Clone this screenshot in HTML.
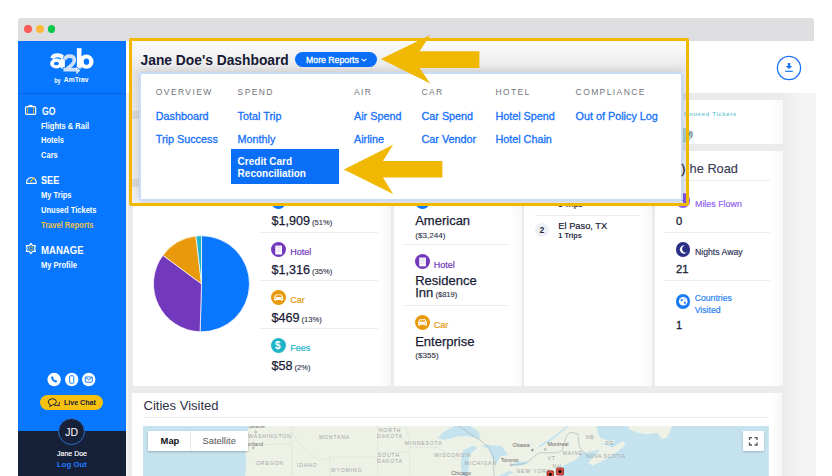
<!DOCTYPE html>
<html><head><meta charset="utf-8">
<style>
*{margin:0;padding:0;box-sizing:border-box}
html,body{width:832px;height:476px;overflow:hidden;background:#fff;font-family:"Liberation Sans",sans-serif}
.a{position:absolute;white-space:nowrap;line-height:1}
.card{position:absolute;background:linear-gradient(90deg,#fff 0,#fff calc(100% - 11px),#f7f7f7 100%)}
.sb{color:#fff;font-weight:700}
</style></head><body>
<div class="a" style="left:17.5px;top:17.5px;width:796.5px;height:23px;background:#dedee0;border-radius:3px 3px 0 0"></div>
<div class="a" style="left:24.20px;top:25.30px;width:7.8px;height:7.8px;border-radius:50%;background:#fd5c57;"></div>
<div class="a" style="left:36.30px;top:25.30px;width:7.8px;height:7.8px;border-radius:50%;background:#feb93a;"></div>
<div class="a" style="left:47.70px;top:25.30px;width:7.8px;height:7.8px;border-radius:50%;background:#0cc84b;"></div>
<div class="a" style="left:18px;top:40.5px;width:108px;height:436px;background:#0677fe;"></div>
<div class="a" style="left:18px;top:431px;width:108px;height:45px;background:#172039;"></div>
<div class="a" style="left:126px;top:40.5px;width:688px;height:53px;background:#fff;"></div>
<div class="a" style="left:126px;top:93px;width:690px;height:383px;background:#ebebeb;"></div>
<div class="a" style="left:126px;top:93px;width:1.6px;height:383px;background:#f5f3f1;"></div>
<div class="a" style="left:782.5px;top:93px;width:33.5px;height:383px;background:linear-gradient(90deg,#ebebeb 0px,#f0f0f0 8px,#f4f4f4 20px);"></div>
<svg class="a" style="left:18px;top:40px" width="108" height="60" viewBox="18 40 108 60">
 <path d="M52.2 58.3 Q53.2 55.2 57.6 55.2 Q62.9 55.2 62.9 59.3 V68.5" fill="none" stroke="#fff" stroke-width="4"/>
 <path fill-rule="evenodd" fill="#fff" d="M50.1 63.5 A6.3 5.1 0 1 0 62.7 63.5 A6.3 5.1 0 1 0 50.1 63.5 Z M53.9 63.5 A2.5 1.85 0 1 0 58.9 63.5 A2.5 1.85 0 1 0 53.9 63.5 Z"/>
 <rect x="76.9" y="48.2" width="4.6" height="20.3" fill="#fff"/>
 <path fill-rule="evenodd" fill="#fff" d="M79.2 61.7 A7.2 7.1 0 1 0 93.6 61.7 A7.2 7.1 0 1 0 79.2 61.7 Z M83.7 61.7 A2.75 3.1 0 1 0 89.2 61.7 A2.75 3.1 0 1 0 83.7 61.7 Z"/>
 <g stroke="#0677fe" stroke-width="1" fill="none">
  <path d="M64.6 59.6 Q65.5 56.1 69.6 56.1 Q74.4 56.1 74.4 60 Q74.4 62.6 71 65.6 L66.2 69.6" stroke-width="4.8"/>
  <rect x="63.4" y="67.6" width="13.6" height="4" />
  <path d="M76.2 66.2 L80.6 70.6 L76.2 75 Z"/>
 </g>
 <g fill="#d0e0f8">
  <path d="M64.6 59.6 Q65.5 56.1 69.6 56.1 Q74.4 56.1 74.4 60 Q74.4 62.6 71 65.6 L66.2 69.6" fill="none" stroke="#d0e0f8" stroke-width="3.6"/>
  <rect x="63.4" y="67.8" width="13.6" height="3.7"/>
  <path d="M76.2 66.6 L80.4 70.6 L76.2 74.6 Z"/>
 </g>
 <text x="54.3" y="82.5" font-family="Liberation Sans" font-weight="700" font-size="6.4" fill="#fff" textLength="6.3" lengthAdjust="spacingAndGlyphs">by</text>
 <text x="63.8" y="82.4" font-family="Liberation Sans" font-weight="700" font-size="6.6" fill="#fff" textLength="24.7" lengthAdjust="spacingAndGlyphs">AmTrav</text>
</svg>
<div class="a" style="left:18px;top:92.8px;width:108px;height:1px;background:#0a63d8;"></div>
<svg class="a" style="left:18px;top:100px" width="30" height="160" viewBox="18 100 30 160">
 <rect x="25.5" y="106.6" width="10.2" height="7.8" rx="1.2" fill="none" stroke="#fff" stroke-width="1.1"/>
 <path d="M29 106.6 V105.4 H32.2 V106.6" fill="none" stroke="#fff" stroke-width="1"/>
 <path d="M27.6 107.2 V113.8 M33.6 107.2 V113.8" stroke="#e2b424" stroke-width="0.9"/>
 <path d="M26.6 183.4 A4.9 4.9 0 1 1 36.2 183.4 Z" fill="none" stroke="#fff" stroke-width="1.1"/>
 <path d="M31 180.8 L34.2 178" stroke="#e2b424" stroke-width="1.2" stroke-linecap="round"/>
 <circle cx="31" cy="180.8" r="0.9" fill="#e2b424"/>
 <path d="M30.85 243.4 L32.6 245.6 L35.4 245.6 L34.6 248.5 L35.4 251.4 L32.6 251.4 L30.85 253.6 L29.1 251.4 L26.3 251.4 L27.1 248.5 L26.3 245.6 L29.1 245.6 Z" fill="none" stroke="#fff" stroke-width="1.1" stroke-linejoin="round"/>
 <circle cx="30.85" cy="248.5" r="1.7" fill="none" stroke="#e2b424" stroke-width="0.9"/>
</svg>
<div class="a" style="left:41.5px;top:106.80px;font-size:10.2px;font-weight:700;color:#fff;transform:scaleX(0.85);transform-origin:0 0;">GO</div>
<div class="a" style="left:41.0px;top:122.80px;font-size:8.2px;font-weight:700;color:#fff;transform:scaleX(0.92);transform-origin:0 0;">Flights &amp; Rail</div>
<div class="a" style="left:41.0px;top:137.30px;font-size:8.2px;font-weight:700;color:#fff;transform:scaleX(0.92);transform-origin:0 0;">Hotels</div>
<div class="a" style="left:41.0px;top:152.00px;font-size:8.2px;font-weight:700;color:#fff;transform:scaleX(0.92);transform-origin:0 0;">Cars</div>
<div class="a" style="left:41.3px;top:175.60px;font-size:10.2px;font-weight:700;color:#fff;transform:scaleX(0.9);transform-origin:0 0;">SEE</div>
<div class="a" style="left:41.0px;top:192.40px;font-size:8.2px;font-weight:700;color:#fff;transform:scaleX(0.92);transform-origin:0 0;">My Trips</div>
<div class="a" style="left:41.0px;top:207.00px;font-size:8.2px;font-weight:700;color:#fff;transform:scaleX(0.92);transform-origin:0 0;">Unused Tickets</div>
<div class="a" style="left:41.0px;top:221.80px;font-size:8.2px;font-weight:700;color:#f2c14a;transform:scaleX(0.92);transform-origin:0 0;">Travel Reports</div>
<div class="a" style="left:41.3px;top:246.00px;font-size:10.2px;font-weight:700;color:#fff;transform:scaleX(0.94);transform-origin:0 0;">MANAGE</div>
<div class="a" style="left:41.0px;top:262.20px;font-size:8.2px;font-weight:700;color:#fff;transform:scaleX(0.92);transform-origin:0 0;">My Profile</div>
<svg class="a" style="left:46px;top:372px" width="52" height="16" viewBox="46 372 52 16">
 <circle cx="54.1" cy="379.5" r="6.7" fill="#fff"/>
 <circle cx="71.7" cy="379.5" r="6.7" fill="#fff"/>
 <circle cx="88.7" cy="379.5" r="6.7" fill="#fff"/>
 <path d="M51.6 376.6 q0.6 -0.8 1.2 0 l0.7 1 q0.3 0.5 -0.2 0.9 q0.6 1.3 1.8 1.9 q0.4 -0.5 0.9 -0.2 l1 0.7 q0.6 0.5 -0.1 1.2 q-1 0.9 -2.3 0.1 q-2.2 -1.3 -3.3 -3.5 q-0.4 -1.2 0.3 -2.1z" fill="#0677fe"/>
 <rect x="69.6" y="375.8" width="4.2" height="7.4" rx="0.8" fill="none" stroke="#0677fe" stroke-width="0.9"/>
 <rect x="85.3" y="377" width="7" height="5.2" rx="0.5" fill="none" stroke="#0677fe" stroke-width="0.9"/>
 <path d="M85.5 377.3 L88.8 379.9 L92.1 377.3" fill="none" stroke="#0677fe" stroke-width="0.9"/>
</svg>
<div class="a" style="left:40.4px;top:394.6px;width:62.5px;height:15.4px;background:#f5c10e;border-radius:8px"></div>
<svg class="a" style="left:47px;top:397px" width="13" height="11" viewBox="0 0 13 11">
 <path d="M1.2 5 q0 -3 4 -3.3 q4 0 4.2 3 q0 3 -4 3.2 l-2.6 1.8 l0.4 -2.2 q-2 -0.8 -2 -2.5z" fill="none" stroke="#172039" stroke-width="1"/>
 <path d="M7.5 8.5 q2.5 0.5 3.5 -0.5 l1.2 1 l-0.3 -1.6 q1 -1 0.5 -2.5" fill="none" stroke="#172039" stroke-width="1"/>
</svg>
<div class="a" style="left:63.6px;top:399.40px;font-size:7.6px;font-weight:700;color:#172039;transform:scaleX(0.93);transform-origin:0 0;">Live Chat</div>
<div class="a" style="left:58.20px;top:418.00px;width:27px;height:27px;border-radius:50%;background:#172039;border:1.2px solid #2a6fd0"></div>
<div class="a" style="left:58.2px;top:427.80px;width:27px;text-align:center;font-size:10.4px;color:#fff">JD</div>
<div class="a" style="left:18px;top:449.91px;width:108px;text-align:center;font-size:7px;color:#fff;-webkit-text-stroke:0.15px #fff">Jane Doe</div>
<div class="a" style="left:18px;top:460.70px;width:108px;text-align:center;font-size:7.8px;font-weight:700;color:#1f7bff">Log Out</div>
<div class="a" style="left:132px;top:41px;width:554px;height:31px;background:linear-gradient(180deg,#fbfbfb 0%,#f3f3f3 45%,#e6e6e6 100%);"></div>
<div class="a" style="left:140.6px;top:54.20px;font-size:13.8px;font-weight:700;color:#161a35;">Jane Doe's Dashboard</div>
<div class="a" style="left:295.3px;top:51.6px;width:81.6px;height:15.3px;background:#0a6ff6;border-radius:8px"></div>
<div class="a" style="left:306px;top:55.60px;font-size:9px;font-weight:400;color:#fff;transform:scaleX(0.97);transform-origin:0 0;-webkit-text-stroke:0.3px #fff">More Reports</div>
<svg class="a" style="left:359.5px;top:57.3px" width="8" height="6" viewBox="0 0 8 6"><path d="M1.6 1.8 L4 4.1 L6.4 1.8" fill="none" stroke="#fff" stroke-width="1.1"/></svg>
<svg class="a" style="left:776px;top:55px" width="26" height="26" viewBox="776 55 26 26">
 <circle cx="789" cy="68" r="11.6" fill="none" stroke="#1a73f5" stroke-width="1.3"/>
 <path d="M787.8 63 H790.2 V65.9 H792.3 L789 69 L785.7 65.9 H787.8 Z" fill="#1a73f5"/>
 <rect x="785.2" y="70.7" width="7.6" height="1.2" fill="#1a73f5"/>
</svg>
<div class="card" style="left:132px;top:100px;width:650.5px;height:44.4px"></div>
<div class="card" style="left:132.5px;top:150.6px;width:258.5px;height:235.3px"></div>
<div class="card" style="left:394px;top:150.6px;width:127.5px;height:235.3px"></div>
<div class="card" style="left:524.2px;top:150.6px;width:128.2px;height:235.3px"></div>
<div class="card" style="left:655px;top:150.6px;width:127.5px;height:235.3px"></div>
<div class="card" style="left:132.3px;top:392.8px;width:650.2px;height:83.2px"></div>
<svg class="a" style="left:150px;top:232px" width="104" height="104" viewBox="150 232 104 104">
 <path d="M201.5 283.8 L201.5 235.8 A48 48 0 1 1 200.08 331.78 Z" fill="#0a77ff" stroke="#fff" stroke-width="0.7"/>
 <path d="M201.5 283.8 L200.08 331.78 A48 48 0 0 1 162.86 255.32 Z" fill="#7239bd" stroke="#fff" stroke-width="0.7"/>
 <path d="M201.5 283.8 L162.86 255.32 A48 48 0 0 1 195.98 236.12 Z" fill="#e8990c" stroke="#fff" stroke-width="0.7"/>
 <path d="M201.5 283.8 L195.98 236.12 A48 48 0 0 1 201.5 235.8 Z" fill="#20b4c8" stroke="#fff" stroke-width="0.7"/>
</svg>
<div class="a" style="left:270.50px;top:193.90px;width:15.2px;height:15.2px;border-radius:50%;background:#0a77ff;"></div>
<div class="a" style="left:290.2px;top:198.00px;font-size:9px;font-weight:400;color:#0a77ff;-webkit-text-stroke:0.2px #0a77ff">Air</div>
<div class="a" style="left:271.4px;top:215.20px;font-size:12.6px;font-weight:400;color:#1a1c35;-webkit-text-stroke:0.25px #1a1c35">$1,909<span style="font-size:7.6px;color:#2e3048;-webkit-text-stroke:0.1px #2e3048"> (51%)</span></div>
<div class="a" style="left:260.3px;top:232.10px;width:117.70px;height:1px;background:#ececec"></div>
<div class="a" style="left:270.50px;top:241.80px;width:15.2px;height:15.2px;border-radius:50%;background:#7239bd;"></div>
<svg class="a" style="left:270.50px;top:241.80px" width="15.20" height="15.20" viewBox="0 0 15.2 15.2"><rect x="4.3" y="3.6" width="6.7" height="8.9" fill="#fff"/><path d="M5.6 5.3 H9.6 M5.6 7.3 H9.6 M5.6 9.3 H9.6" stroke="#7239bd" stroke-width="0.45" opacity="0.5"/></svg>
<div class="a" style="left:290.2px;top:247.80px;font-size:9px;font-weight:400;color:#7239bd;-webkit-text-stroke:0.2px #7239bd">Hotel</div>
<div class="a" style="left:271.4px;top:263.60px;font-size:12.6px;font-weight:400;color:#1a1c35;-webkit-text-stroke:0.25px #1a1c35">$1,316<span style="font-size:7.6px;color:#2e3048;-webkit-text-stroke:0.1px #2e3048"> (35%)</span></div>
<div class="a" style="left:260.3px;top:280.00px;width:117.70px;height:1px;background:#ececec"></div>
<div class="a" style="left:270.50px;top:289.90px;width:15.2px;height:15.2px;border-radius:50%;background:#e8990c;"></div>
<svg class="a" style="left:270.50px;top:289.90px" width="15.20" height="15.20" viewBox="0 0 15.2 15.2"><path d="M3.1 7.4 L4.2 5.1 Q4.5 4.4 5.3 4.4 H9.9 Q10.7 4.4 11 5.1 L12.1 7.4 V9.9 H3.1 Z M3.5 9.8 H5.1 V10.8 H3.5 Z M10.1 9.8 H11.7 V10.8 H10.1 Z" fill="#fff"/><path d="M5.1 5.3 H10.1 L10.7 6.9 H4.5 Z" fill="#e8990c"/><circle cx="4.6" cy="8.4" r="0.6" fill="#e8990c"/><circle cx="10.6" cy="8.4" r="0.6" fill="#e8990c"/></svg>
<div class="a" style="left:290.2px;top:295.70px;font-size:9px;font-weight:400;color:#e8990c;-webkit-text-stroke:0.2px #e8990c">Car</div>
<div class="a" style="left:271.4px;top:312.30px;font-size:12.6px;font-weight:400;color:#1a1c35;-webkit-text-stroke:0.25px #1a1c35">$469<span style="font-size:7.6px;color:#2e3048;-webkit-text-stroke:0.1px #2e3048"> (13%)</span></div>
<div class="a" style="left:260.3px;top:328.30px;width:117.70px;height:1px;background:#ececec"></div>
<div class="a" style="left:270.50px;top:338.10px;width:15.2px;height:15.2px;border-radius:50%;background:#20b4c8;"></div>
<div class="a" style="left:274.90px;top:340.50px;font-size:10px;font-weight:700;color:#fff">$</div>
<div class="a" style="left:290.2px;top:344.10px;font-size:9px;font-weight:400;color:#20b4c8;-webkit-text-stroke:0.2px #20b4c8">Fees</div>
<div class="a" style="left:271.4px;top:360.20px;font-size:12.6px;font-weight:400;color:#1a1c35;-webkit-text-stroke:0.25px #1a1c35">$58<span style="font-size:7.6px;color:#2e3048;-webkit-text-stroke:0.1px #2e3048"> (2%)</span></div>
<div class="a" style="left:414.50px;top:194.00px;width:15px;height:15px;border-radius:50%;background:#0a77ff;"></div>
<div class="a" style="left:433.7px;top:198.00px;font-size:9px;font-weight:400;color:#0a77ff;-webkit-text-stroke:0.2px #0a77ff">Air</div>
<div class="a" style="left:415.2px;top:214.20px;font-size:13px;font-weight:400;color:#1a1c35;-webkit-text-stroke:0.25px #1a1c35">American</div>
<div class="a" style="left:415.2px;top:231.60px;font-size:8.1px;font-weight:400;color:#2e3048;-webkit-text-stroke:0.1px #2e3048">($3,244)</div>
<div class="a" style="left:404.3px;top:244.10px;width:104.10px;height:1px;background:#ececec"></div>
<div class="a" style="left:414.50px;top:254.30px;width:15px;height:15px;border-radius:50%;background:#7239bd;"></div>
<svg class="a" style="left:414.50px;top:254.30px" width="15.00" height="15.00" viewBox="0 0 15.2 15.2"><rect x="4.3" y="3.6" width="6.7" height="8.9" fill="#fff"/><path d="M5.6 5.3 H9.6 M5.6 7.3 H9.6 M5.6 9.3 H9.6" stroke="#7239bd" stroke-width="0.45" opacity="0.5"/></svg>
<div class="a" style="left:433.7px;top:260.50px;font-size:9px;font-weight:400;color:#7239bd;-webkit-text-stroke:0.2px #7239bd">Hotel</div>
<div class="a" style="left:415.2px;top:274.10px;font-size:13px;font-weight:400;color:#1a1c35;-webkit-text-stroke:0.25px #1a1c35">Residence</div>
<div class="a" style="left:415.2px;top:286.10px;font-size:13px;font-weight:400;color:#1a1c35;-webkit-text-stroke:0.25px #1a1c35">Inn<span style="font-size:7.6px;color:#2e3048;-webkit-text-stroke:0.1px #2e3048"> ($819)</span></div>
<div class="a" style="left:404.3px;top:304.90px;width:104.10px;height:1px;background:#ececec"></div>
<div class="a" style="left:414.50px;top:314.50px;width:15px;height:15px;border-radius:50%;background:#e8990c;"></div>
<svg class="a" style="left:414.50px;top:314.50px" width="15.00" height="15.00" viewBox="0 0 15.2 15.2"><path d="M3.1 7.4 L4.2 5.1 Q4.5 4.4 5.3 4.4 H9.9 Q10.7 4.4 11 5.1 L12.1 7.4 V9.9 H3.1 Z M3.5 9.8 H5.1 V10.8 H3.5 Z M10.1 9.8 H11.7 V10.8 H10.1 Z" fill="#fff"/><path d="M5.1 5.3 H10.1 L10.7 6.9 H4.5 Z" fill="#e8990c"/><circle cx="4.6" cy="8.4" r="0.6" fill="#e8990c"/><circle cx="10.6" cy="8.4" r="0.6" fill="#e8990c"/></svg>
<div class="a" style="left:433.7px;top:320.90px;font-size:9px;font-weight:400;color:#e8990c;-webkit-text-stroke:0.2px #e8990c">Car</div>
<div class="a" style="left:415.2px;top:335.20px;font-size:13px;font-weight:400;color:#1a1c35;-webkit-text-stroke:0.25px #1a1c35">Enterprise</div>
<div class="a" style="left:415.2px;top:352.40px;font-size:8.1px;font-weight:400;color:#2e3048;-webkit-text-stroke:0.1px #2e3048">($355)</div>
<div class="a" style="left:558.3px;top:201.00px;font-size:7.5px;font-weight:700;color:#2b2d45;">1 Trips</div>
<div class="a" style="left:534.8px;top:215.20px;width:104.20px;height:1px;background:#ececec"></div>
<div class="a" style="left:534.90px;top:222.90px;width:14.6px;height:14.6px;border-radius:50%;background:#edf0f5;"></div>
<div class="a" style="left:539.6px;top:226.40px;font-size:8.6px;font-weight:700;color:#2b2d45;">2</div>
<div class="a" style="left:558.3px;top:222.30px;font-size:9.3px;font-weight:400;color:#1a1c35;-webkit-text-stroke:0.2px #1a1c35">El Paso, TX</div>
<div class="a" style="left:558.3px;top:232.30px;font-size:7.3px;font-weight:700;color:#2b2d45;">1 Trips</div>
<div class="a" style="left:689.6px;top:162.60px;font-size:12.8px;font-weight:400;color:#3a3c55;-webkit-text-stroke:0.15px #3a3c55">he Road</div>
<div class="a" style="left:665px;top:179.70px;width:104.50px;height:1px;background:#ececec"></div>
<div class="a" style="left:675.75px;top:193.25px;width:14.5px;height:14.5px;border-radius:50%;background:#8b5cf6;"></div>
<div class="a" style="left:695px;top:200.20px;font-size:8.9px;font-weight:400;color:#8b5cf6;-webkit-text-stroke:0.15px #8b5cf6">Miles Flown</div>
<div class="a" style="left:676px;top:216.00px;font-size:11.2px;font-weight:400;color:#1a1c35;-webkit-text-stroke:0.3px #1a1c35">0</div>
<div class="a" style="left:665px;top:231.90px;width:104.50px;height:1px;background:#ececec"></div>
<div class="a" style="left:675.75px;top:242.35px;width:14.5px;height:14.5px;border-radius:50%;background:#2b2f85;"></div>
<svg class="a" style="left:675.75px;top:242.35px" width="14.5" height="14.5" viewBox="0 0 14.5 14.5"><path d="M8.6 3.4 A4.2 4.2 0 1 0 11.2 10.3 A3.6 3.6 0 1 1 8.6 3.4 Z" fill="#fff"/></svg>
<div class="a" style="left:695px;top:248.00px;font-size:8.7px;font-weight:400;color:#2b2f55;-webkit-text-stroke:0.15px #2b2f55">Nights Away</div>
<div class="a" style="left:676px;top:264.20px;font-size:11.2px;font-weight:400;color:#1a1c35;-webkit-text-stroke:0.3px #1a1c35">21</div>
<div class="a" style="left:665px;top:280.40px;width:104.50px;height:1px;background:#ececec"></div>
<div class="a" style="left:675.75px;top:294.25px;width:14.5px;height:14.5px;border-radius:50%;background:#1a7cf5;"></div>
<svg class="a" style="left:675.75px;top:294.25px" width="14.5" height="14.5" viewBox="0 0 14.5 14.5"><circle cx="7.25" cy="7.25" r="4.3" fill="#fff"/><path d="M5 5 Q6.5 4.6 7 6 Q6 7.5 4.6 7.2 Z M8.2 7.8 Q9.8 7.4 10 9 Q9 10.4 8 9.6 Z M8.6 4 Q9.6 4.6 9.4 5.6 L8.4 5.2 Z" fill="#1a7cf5"/></svg>
<div class="a" style="left:694.7px;top:293.60px;font-size:8.7px;font-weight:400;color:#1a7cf5;-webkit-text-stroke:0.15px #1a7cf5">Countries</div>
<div class="a" style="left:694.7px;top:305.70px;font-size:8.7px;font-weight:400;color:#1a7cf5;-webkit-text-stroke:0.15px #1a7cf5">Visited</div>
<div class="a" style="left:676px;top:320.40px;font-size:11.2px;font-weight:400;color:#1a1c35;-webkit-text-stroke:0.3px #1a1c35">1</div>
<div class="a" style="left:676.50px;top:128.00px;width:15px;height:15px;border-radius:50%;background:#b7ddd6;"></div>
<div class="a" style="left:684.0px;top:110.60px;font-size:6.2px;font-weight:400;color:#3bb7c8;letter-spacing:0.75px">Unused Tickets</div>
<div class="a" style="left:687px;top:131.00px;font-size:6.8px;font-weight:400;color:#1a1c35;">v)</div>
<div class="a" style="left:143.6px;top:399.40px;font-size:13px;font-weight:400;color:#2d2f45;">Cities Visited</div>
<div class="a" style="left:143.6px;top:417.00px;width:625.40px;height:1px;background:#ececec"></div>
<svg class="a" style="left:143.2px;top:425.7px" width="625.8" height="50.3" viewBox="143.2 425.7 625.8 50.3" font-family="Liberation Sans">
 <rect x="143.2" y="425.7" width="625.8" height="50.3" fill="#eef2e6"/>
 <path d="M143.2 425.7 H250 L247 432 L246 440 L245.5 450 L246.5 462 L245.5 476 H143.2 Z" fill="#c5e3ef"/>
 <path d="M596.8 425.7 L769 425.7 L769 476 L558.8 476 L563.7 465.3 L576.6 458.8 L581 453 L590 451.5 L600.5 449.2 L597 453.5 L588.2 462.4 L592.5 465.3 L605.5 459.5 L618.5 450.8 L625.7 444.4 L622.8 440.8 L612.7 447.2 L602.6 443.6 L600 437 L598.3 433.5 Z" fill="#c5e3ef"/>
 <path d="M599.7 437.1 L609.8 440.8 L615.6 440 L611 444 L603 443 Z" fill="#eef2e6"/>
 <path d="M628 425.7 L672 425.7 L670 432 L666.5 437.9 L661.5 438.4 L657.5 432.5 L648 434 L638 432.4 L630 429.5 Z" fill="#eef2e6"/>
 <path d="M567.4 425.7 L569.5 425.7 L552 440 L540 447 L538.5 446 L551 438 Z" fill="#c5e3ef"/>
 <path d="M437.3 438 L444.5 431.5 L454.6 425.7 L470.5 425.7 L479.1 431.5 L480.6 438.75 L467.6 435.9 L459 435.9 L448.8 438.75 L444.5 439.5 Z" fill="#c5e3ef"/>
 <path d="M463.3 450.3 L473.4 445.2 L477.7 447.4 L469 454.6 L469 469 L466.2 476 L461.8 476 L461.1 463.3 Z" fill="#c5e3ef"/>
 <path d="M480.6 445.2 L487.8 444.5 L502.2 446 L508 454.6 L500.8 456 L496.4 463.3 L492.1 457.5 L489.2 448.8 Z" fill="#c5e3ef"/>
 <path d="M509.4 464.7 L518 461.8 L529.6 460.4 L523.8 464.7 L513.8 466.2 Z M497.9 476 L509.4 470.5 L513.8 472 L506.5 476 Z" fill="#c5e3ef"/>
 <path d="M459 425.7 L480.6 440.2 L487.8 446 L493.6 456 L494.3 476" fill="none" stroke="#9a9fa3" stroke-width="0.5"/>
 <path d="M511.6 464.7 L526 463.3 L539 452.5 L557.8 452.5 L562.1 450.3 L566.5 436 L569.4 432.8 L572.3 432.1 L578.1 433.5 L579.5 446.5 L585.3 453.7" fill="none" stroke="#9a9fa3" stroke-width="0.5"/>
 <g fill="none" stroke="#c4c7c0" stroke-width="0.5" stroke-dasharray="1 1">
  <path d="M246 445 L292 443.5 M292 425.7 V476 M292 432 L305 450 L320 460 L330 457 V476 M330 457 H378 M378 425.7 V476 M378 452 H410 M406 425.7 L410 445 V476 M410 447 L437 447 L450 455 L461 460 M330 476 H378"/>
 </g>
 <g font-weight="400">
 <text x="249" y="427.5" font-size="5.2" fill="#777" letter-spacing="0">Seattle</text>
 <text x="248.4" y="438" font-size="5.2" fill="#9ea3a8" letter-spacing="0.8">WASHINGTON</text>
 <text x="244" y="446" font-size="5.2" fill="#777" letter-spacing="0">Portland</text>
 <text x="256.2" y="465" font-size="5.2" fill="#9ea3a8" letter-spacing="0.8">OREGON</text>
 <text x="319.1" y="438.6" font-size="5.2" fill="#9ea3a8" letter-spacing="0.8">MONTANA</text>
 <text x="297.2" y="467.2" font-size="5.2" fill="#9ea3a8" letter-spacing="0.8">IDAHO</text>
 <text x="330.9" y="471.3" font-size="5.2" fill="#9ea3a8" letter-spacing="0.8">WYOMING</text>
 <text x="379" y="431.4" font-size="5.2" fill="#9ea3a8" letter-spacing="0.8">NORTH</text>
 <text x="377.3" y="437.3" font-size="5.2" fill="#9ea3a8" letter-spacing="0.8">DAKOTA</text>
 <text x="405" y="444.7" font-size="5.2" fill="#9ea3a8" letter-spacing="0.8">MINNESOTA</text>
 <text x="378" y="456.8" font-size="5.2" fill="#9ea3a8" letter-spacing="0.8">SOUTH</text>
 <text x="377.3" y="462.4" font-size="5.2" fill="#9ea3a8" letter-spacing="0.8">DAKOTA</text>
 <text x="434.5" y="457.1" font-size="5.2" fill="#9ea3a8" letter-spacing="0.8">WISCONSIN</text>
 <text x="464.8" y="464.9" font-size="5.2" fill="#9ea3a8" letter-spacing="0.8">MICHIGAN</text>
 <text x="451.4" y="475" font-size="5.4" fill="#666" letter-spacing="0">Chicago</text>
 <text x="500.9" y="461.5" font-size="5.4" fill="#666" letter-spacing="0">Toronto</text>
 <text x="512.8" y="446.6" font-size="5.4" fill="#666" letter-spacing="0">Ottawa</text>
 <text x="547.7" y="445.6" font-size="5.4" fill="#666" letter-spacing="0">Montreal</text>
 <text x="516.7" y="472.3" font-size="5.2" fill="#9ea3a8" letter-spacing="0.8">NEW YORK</text>
 <text x="547.7" y="460" font-size="5.2" fill="#9ea3a8" letter-spacing="0.8">VT</text>
 <text x="552.8" y="468" font-size="5.2" fill="#9ea3a8" letter-spacing="0.8">NH</text>
 <text x="562.9" y="455" font-size="5.2" fill="#9ea3a8" letter-spacing="0.8">MAINE</text>
 <text x="586" y="457.7" font-size="5.2" fill="#9ea3a8" letter-spacing="0.45">NOVA SCOTIA</text>
 <text x="585.9" y="439.1" font-size="5.2" fill="#9ea3a8" letter-spacing="0.8">NB</text>
 <text x="605.7" y="444.6" font-size="5.2" fill="#9ea3a8" letter-spacing="0.8">PE</text>
 </g>
 <circle cx="511.4" cy="464.7" r="1" fill="#fff" stroke="#777" stroke-width="0.5"/>
 <circle cx="545.4" cy="449.2" r="1" fill="#fff" stroke="#777" stroke-width="0.5"/>
 <circle cx="532.6" cy="449.8" r="1.3" fill="#999"/>
 <circle cx="255.8" cy="431.8" r="0.9" fill="#fff" stroke="#777" stroke-width="0.5"/>
 <circle cx="253.5" cy="447.5" r="0.9" fill="#fff" stroke="#777" stroke-width="0.5"/>
 <rect x="556.6" y="467.6" width="7.2" height="7.2" rx="1.2" fill="#e8493b" stroke="#5a1a14" stroke-width="0.6"/>
 <circle cx="560.2" cy="471.2" r="1.7" fill="#111"/>
 <rect x="547.2" y="470.5" width="6.6" height="7" rx="1.2" fill="#e8493b" stroke="#5a1a14" stroke-width="0.6"/>
 <circle cx="550.5" cy="474" r="1.6" fill="#111"/>
</svg>
<div class="a" style="left:148px;top:431px;width:100px;height:20.2px;background:#fff;box-shadow:0 1px 2px rgba(0,0,0,0.25)"></div>
<div class="a" style="left:190px;top:431px;width:1px;height:20.2px;background:#e6e6e6;"></div>
<div class="a" style="left:160.6px;top:435.80px;font-size:9.4px;font-weight:700;color:#111;">Map</div>
<div class="a" style="left:202.5px;top:435.80px;font-size:9.4px;font-weight:400;color:#555;">Satellite</div>
<div class="a" style="left:743.3px;top:430.7px;width:20.5px;height:20.6px;background:#fff;box-shadow:0 1px 2px rgba(0,0,0,0.2)"></div>
<svg class="a" style="left:743.3px;top:430.7px" width="20.5" height="20.6" viewBox="0 0 20.5 20.6"><path d="M6.5 9 V6.6 H9 M11.5 6.6 H14 V9 M14 11.6 V14 H11.5 M9 14 H6.5 V11.6" fill="none" stroke="#555" stroke-width="1.3"/></svg>
<div class="a" style="left:132px;top:72px;width:6.75px;height:131px;background:linear-gradient(180deg,#e6e6e6 0px,#e9e9e9 38.6px,#d9d9d9 38.6px,#d9d9d9 47.4px,#eaeaea 47.4px,#ececec 107px,#dadada 107px,#dadada 115px,#eeeeee 115px,#f1f1f1 131px);"></div>
<div class="a" style="left:682.7px;top:72px;width:3.3px;height:131px;background:rgba(0,0,0,0.07);"></div>
<div class="a" style="left:138.75px;top:201.3px;width:544px;height:1.7px;background:#e9ecf2;"></div>
<div class="a" style="left:138.75px;top:72px;width:543.95px;height:129.3px;background:#fff;border:2.3px solid #c8dcf6;border-radius:2px;box-shadow:0 0 10px rgba(0,0,0,0.14)"></div>
<div class="a" style="left:155.8px;top:88.00px;font-size:8.5px;font-weight:400;color:#717479;letter-spacing:1.4px">OVERVIEW</div>
<div class="a" style="left:237.6px;top:88.00px;font-size:8.5px;font-weight:400;color:#717479;letter-spacing:1.4px">SPEND</div>
<div class="a" style="left:354px;top:88.00px;font-size:8.5px;font-weight:400;color:#717479;letter-spacing:1.4px">AIR</div>
<div class="a" style="left:421.5px;top:88.00px;font-size:8.5px;font-weight:400;color:#717479;letter-spacing:1.4px">CAR</div>
<div class="a" style="left:495.4px;top:88.00px;font-size:8.5px;font-weight:400;color:#717479;letter-spacing:1.4px">HOTEL</div>
<div class="a" style="left:575.6px;top:88.00px;font-size:8.5px;font-weight:400;color:#717479;letter-spacing:1.4px">COMPLIANCE</div>
<div class="a" style="left:155.8px;top:111.40px;font-size:10.8px;font-weight:400;color:#1570fb;-webkit-text-stroke:0.3px #1570fb">Dashboard</div>
<div class="a" style="left:237.6px;top:111.40px;font-size:10.8px;font-weight:400;color:#1570fb;-webkit-text-stroke:0.3px #1570fb">Total Trip</div>
<div class="a" style="left:354px;top:111.40px;font-size:10.8px;font-weight:400;color:#1570fb;-webkit-text-stroke:0.3px #1570fb">Air Spend</div>
<div class="a" style="left:421.5px;top:111.40px;font-size:10.8px;font-weight:400;color:#1570fb;-webkit-text-stroke:0.3px #1570fb">Car Spend</div>
<div class="a" style="left:495.4px;top:111.40px;font-size:10.8px;font-weight:400;color:#1570fb;-webkit-text-stroke:0.3px #1570fb">Hotel Spend</div>
<div class="a" style="left:575.6px;top:111.40px;font-size:10.8px;font-weight:400;color:#1570fb;-webkit-text-stroke:0.3px #1570fb">Out of Policy Log</div>
<div class="a" style="left:155.8px;top:134.30px;font-size:10.8px;font-weight:400;color:#1570fb;-webkit-text-stroke:0.3px #1570fb">Trip Success</div>
<div class="a" style="left:237.6px;top:134.30px;font-size:10.8px;font-weight:400;color:#1570fb;-webkit-text-stroke:0.3px #1570fb">Monthly</div>
<div class="a" style="left:354px;top:134.30px;font-size:10.8px;font-weight:400;color:#1570fb;-webkit-text-stroke:0.3px #1570fb">Airline</div>
<div class="a" style="left:421.5px;top:134.30px;font-size:10.8px;font-weight:400;color:#1570fb;-webkit-text-stroke:0.3px #1570fb">Car Vendor</div>
<div class="a" style="left:495.4px;top:134.30px;font-size:10.8px;font-weight:400;color:#1570fb;-webkit-text-stroke:0.3px #1570fb">Hotel Chain</div>
<div class="a" style="left:230.9px;top:149.3px;width:108.1px;height:34.7px;background:#0a6ff6;"></div>
<div class="a" style="left:237.6px;top:157.00px;font-size:10px;font-weight:700;color:#fff;">Credit Card</div>
<div class="a" style="left:237.6px;top:169.20px;font-size:10px;font-weight:700;color:#fff;">Reconciliation</div>
<div class="a" style="left:129px;top:38px;width:560px;height:168px;background:transparent;border:3px solid #f0b800;border-radius:2px"></div>
<svg class="a" style="left:0;top:0" width="832" height="476" viewBox="0 0 832 476">
 <path d="M380.9 59.1 L430.2 35.1 L419.6 51.2 L479.4 51.2 L479.4 68 L419.6 68 L430.2 83.5 Z" fill="#f0b800"/>
 <path d="M343.8 169.5 L393.1 144.8 L383 161.1 L442.4 161.1 L442.4 177.6 L383 177.6 L393.1 193.9 Z" fill="#f0b800"/>
</svg>
<div class="a" style="left:681.2px;top:163.00px;font-size:12.5px;font-weight:400;color:#1a1c35;-webkit-text-stroke:0.3px #1a1c35">)</div>
</body></html>
